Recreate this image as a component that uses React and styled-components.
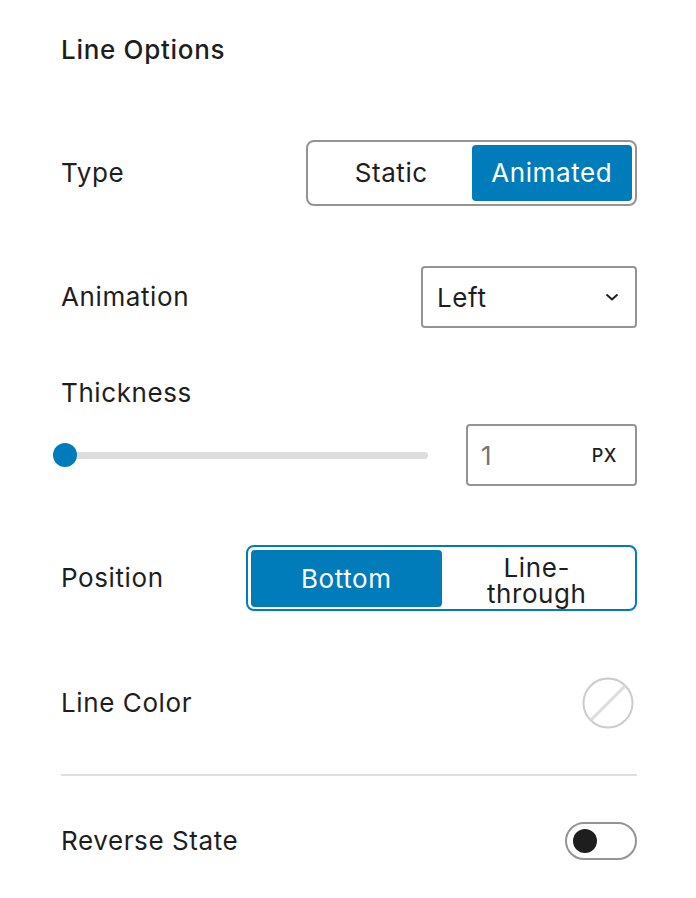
import React from 'react';
import styled, { createGlobalStyle } from 'styled-components';

const GlobalStyle = createGlobalStyle`
    html, body {
        margin: 0;
        padding: 0;
        background: #ffffff;
    }
    body {
        font-family: Inter, 'Noto Sans', 'Liberation Sans', sans-serif;
        color: #1e1e1e;
        letter-spacing: 0.6px;
        -webkit-font-smoothing: antialiased;
    }
`;

const Panel = styled.div`
    width: 696px;
    box-sizing: border-box;
    padding: 32px 59px 40px 61px;
    display: flex;
    flex-direction: column;
`;

const Title = styled.h2`
    margin: 0;
    font-size: 26px;
    line-height: 36px;
    font-weight: 500;
    color: #1e1e1e;
    letter-spacing: 0.7px;
`;

const Row = styled.div`
    display: flex;
    align-items: center;
    justify-content: space-between;
    margin-top: ${(p) => p.$mt || 0}px;
    min-height: ${(p) => p.$h || 36}px;
`;

const Label = styled.span`
    font-size: 26px;
    line-height: 36px;
    color: #1e1e1e;
`;

const Block = styled.div`
    display: flex;
    flex-direction: column;
    margin-top: ${(p) => p.$mt || 0}px;
`;

const ToggleGroup = styled.div`
    display: grid;
    grid-template-columns: 1fr 1fr;
    width: ${(p) => p.$w}px;
    height: 66px;
    box-sizing: border-box;
    padding: 3px;
    border: 2px solid ${(p) => (p.$focused ? '#007cba' : '#949494')};
    border-radius: 8px;
`;

const ToggleOption = styled.button`
    border: none;
    border-radius: 4px;
    margin: 0;
    padding: ${(p) => (p.$wrapped ? '5px 8px 0' : '0 8px')};
    font-family: inherit;
    letter-spacing: inherit;
    font-size: 26px;
    line-height: 26px;
    font-weight: 400;
    background: ${(p) => (p.$active ? '#007cba' : 'transparent')};
    color: ${(p) => (p.$active ? '#ffffff' : '#1e1e1e')};
    display: flex;
    flex-direction: column;
    align-items: center;
    justify-content: center;
    text-align: center;
`;

const Select = styled.div`
    width: 216px;
    height: 62px;
    box-sizing: border-box;
    border: 2px solid #949494;
    border-radius: 4px;
    display: flex;
    align-items: center;
    justify-content: space-between;
    padding: 0 16px 0 14px;
    font-size: 26px;
`;

const SliderRow = styled.div`
    display: flex;
    align-items: center;
    margin-top: 13px;
`;

const SliderTrack = styled.div`
    position: relative;
    margin-left: -6px;
    width: 373px;
    height: 7px;
    border-radius: 4px;
    background: #dddddd;
`;

const SliderThumb = styled.span`
    position: absolute;
    left: -2px;
    top: 50%;
    width: 24px;
    height: 24px;
    margin-top: -12px;
    border-radius: 50%;
    background: #007cba;
`;

const UnitInput = styled.div`
    margin-left: auto;
    width: 171px;
    height: 62px;
    box-sizing: border-box;
    border: 2px solid #949494;
    border-radius: 4px;
    display: flex;
    align-items: center;
    justify-content: space-between;
    padding: 0 18px 0 13px;
`;

const InputValue = styled.span`
    font-size: 26px;
    color: #757575;
`;

const Unit = styled.span`
    font-size: 18px;
    font-weight: 500;
    color: #1e1e1e;
`;

const Swatch = styled.span`
    width: 52px;
    height: 52px;
    margin-right: 3px;
    display: inline-flex;
`;

const Divider = styled.hr`
    margin: 45px 0 0;
    border: none;
    height: 2px;
    background: #e0e0e0;
`;

const Switch = styled.span`
    width: 72px;
    height: 38px;
    box-sizing: border-box;
    border: 2px solid #949494;
    border-radius: 19px;
    display: flex;
    align-items: center;
    padding-left: 6px;
`;

const Knob = styled.span`
    width: 24px;
    height: 24px;
    border-radius: 50%;
    background: #1e1e1e;
`;

const Chevron = () => (
    <svg width="14" height="8" viewBox="0 0 14 8" fill="none">
        <path d="M1.5 1.5 L7 6.5 L12.5 1.5" stroke="#1e1e1e" strokeWidth="2" />
    </svg>
);

const NoColor = () => (
    <svg width="52" height="52" viewBox="0 0 52 52" fill="none">
        <circle cx="26" cy="26" r="24.5" stroke="#cccccc" strokeWidth="2" />
        <line x1="9" y1="43" x2="43" y2="9" stroke="#dddddd" strokeWidth="3" />
    </svg>
);

const App = () => {
    return (
        <Panel>
            <GlobalStyle />
            <Title>Line Options</Title>

            <Row $mt={72} $h={66}>
                <Label>Type</Label>
                <ToggleGroup $w={331}>
                    <ToggleOption>Static</ToggleOption>
                    <ToggleOption $active>Animated</ToggleOption>
                </ToggleGroup>
            </Row>

            <Row $mt={60} $h={62}>
                <Label>Animation</Label>
                <Select>
                    <span>Left</span>
                    <Chevron />
                </Select>
            </Row>

            <Block $mt={47}>
                <Label>Thickness</Label>
                <SliderRow>
                    <SliderTrack>
                        <SliderThumb />
                    </SliderTrack>
                    <UnitInput>
                        <InputValue>1</InputValue>
                        <Unit>PX</Unit>
                    </UnitInput>
                </SliderRow>
            </Block>

            <Row $mt={59} $h={66}>
                <Label>Position</Label>
                <ToggleGroup $w={391} $focused>
                    <ToggleOption $active>Bottom</ToggleOption>
                    <ToggleOption $wrapped>
                        <span>Line-</span>
                        <span>through</span>
                    </ToggleOption>
                </ToggleGroup>
            </Row>

            <Row $mt={66} $h={52}>
                <Label>Line Color</Label>
                <Swatch>
                    <NoColor />
                </Swatch>
            </Row>

            <Divider />

            <Row $mt={46} $h={38}>
                <Label>Reverse State</Label>
                <Switch>
                    <Knob />
                </Switch>
            </Row>
        </Panel>
    );
};

export default App;
